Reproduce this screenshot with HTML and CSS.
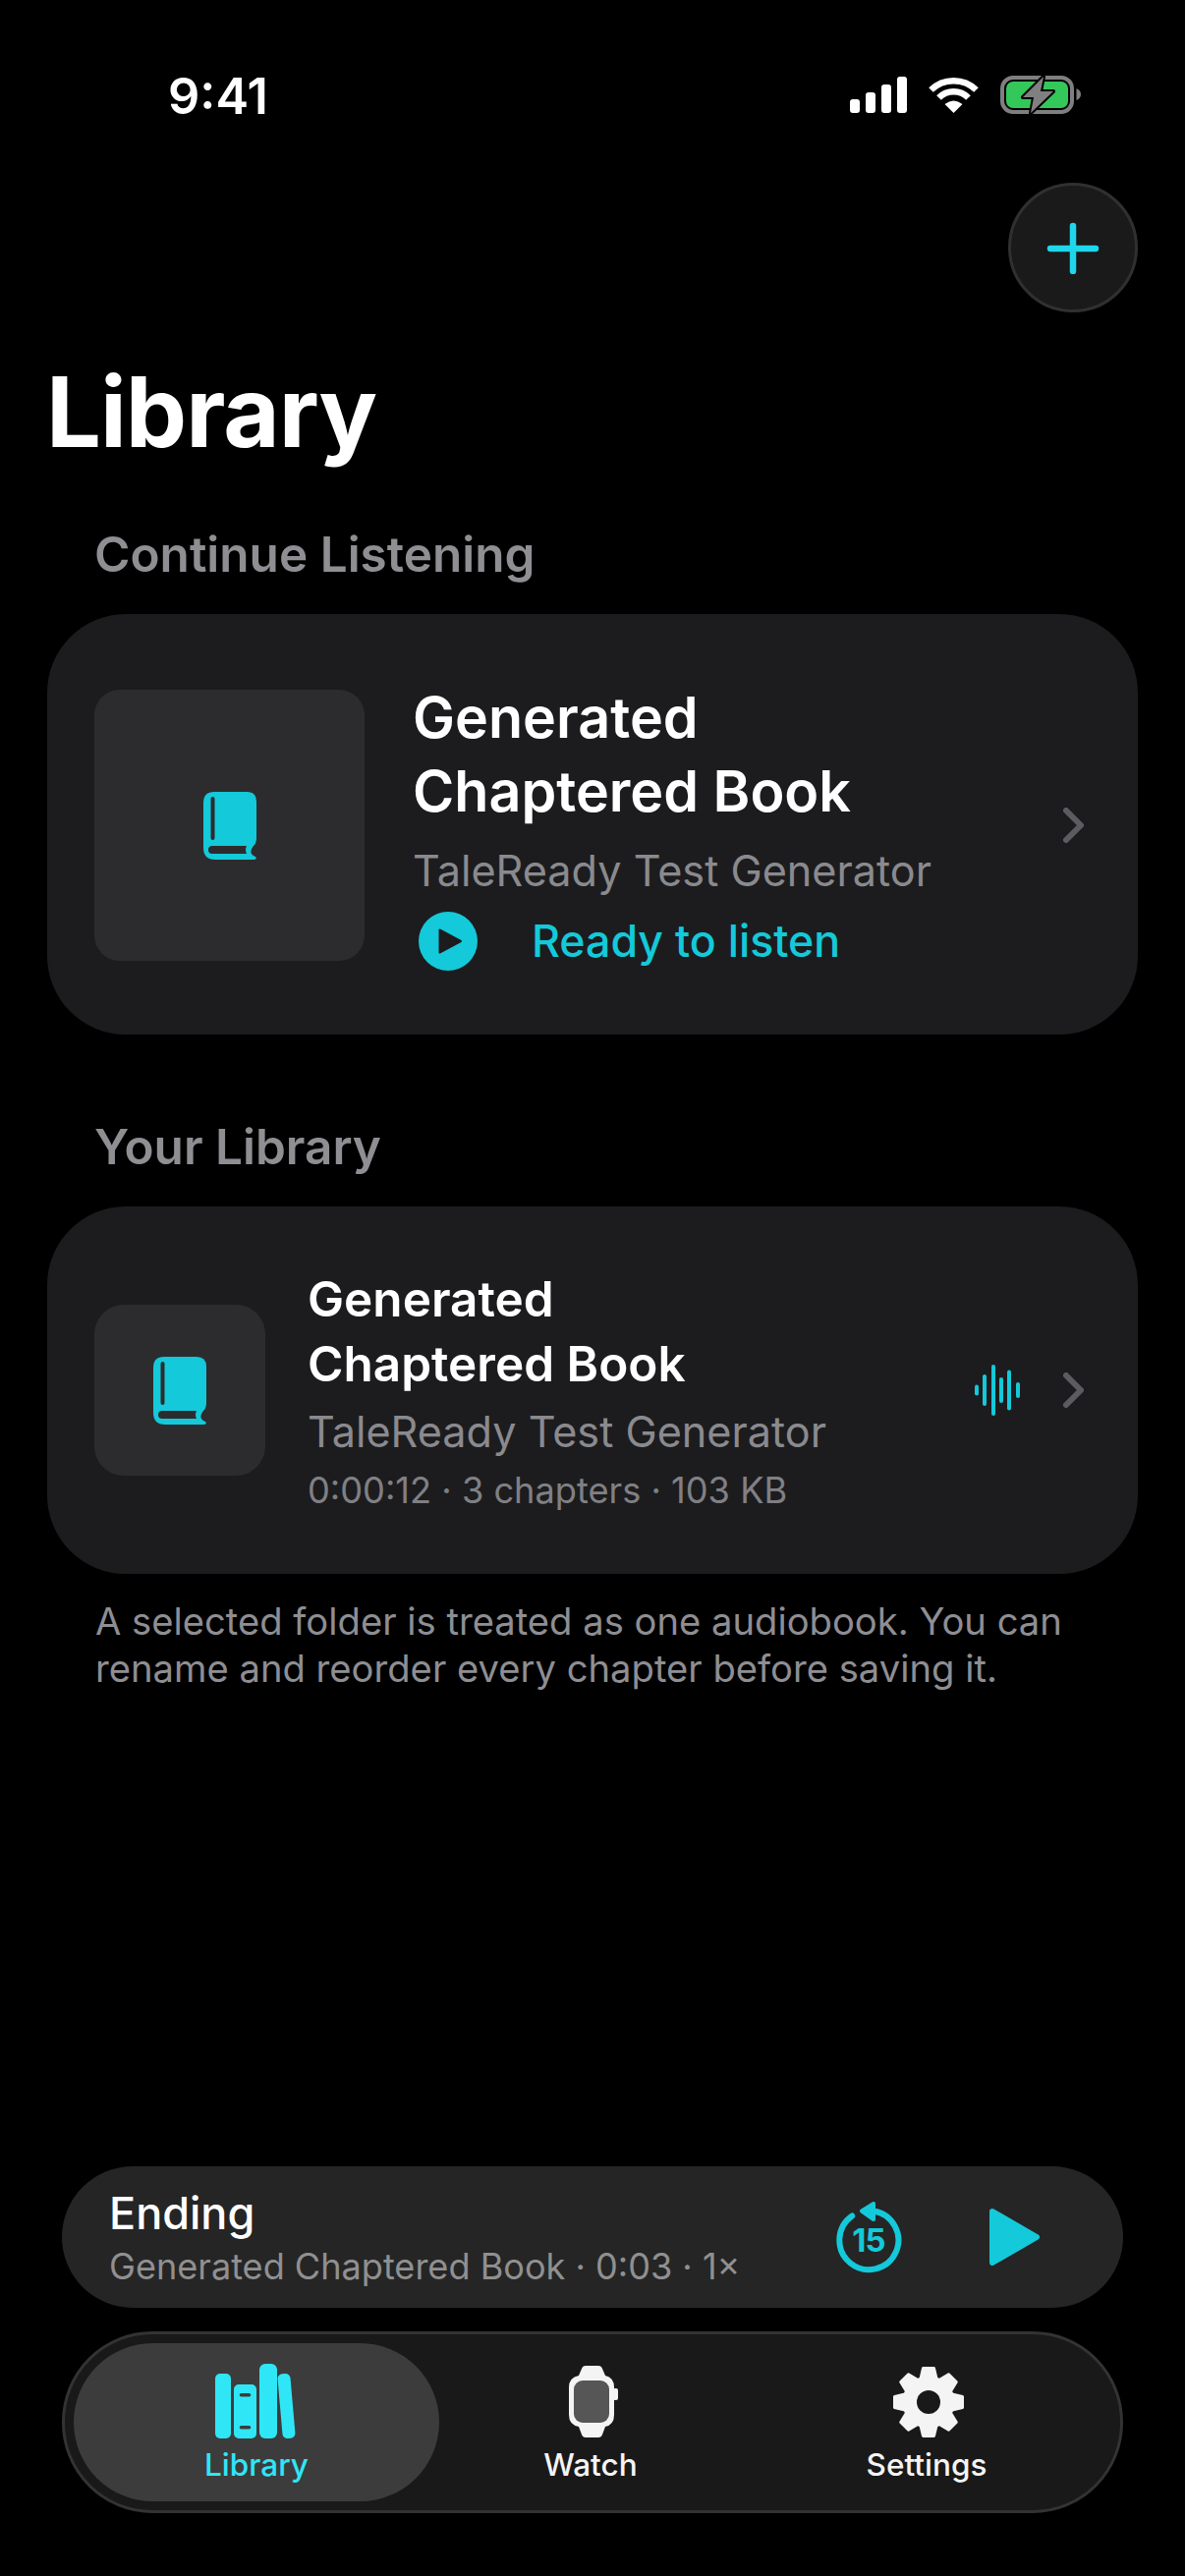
FILE: index.html
```html
<!DOCTYPE html>
<html lang="en">
<head>
    <meta charset="UTF-8">
    <meta name="viewport" content="width=device-width, initial-scale=1.0">
    <title>Library</title>
    <link rel="stylesheet" href="styles.css">
</head>
<body>
    <svg class="defs" width="0" height="0">
        <symbol id="book" viewBox="0 0 54 69">
            <path fill-rule="evenodd" d="M11 0H44Q54 0 54 10V47Q54 52 51 55Q47 60 49 63Q50 65 53 66Q55 68 52 69H12Q0 69 0 57V11Q0 0 11 0ZM7.5 7V47a2 2 0 0 0 4 0V7a2 2 0 0 0-4 0ZM9 55a4 4 0 0 0 0 8H44Q42 59 44 55Z"/>
        </symbol>
        <symbol id="chevron" viewBox="0 0 21 36">
            <path d="M3 3L18 18L3 33" fill="none" stroke="#5c5c60" stroke-width="6" stroke-linecap="round" stroke-linejoin="round"/>
        </symbol>
    </svg>

    <div class="page">
        <div class="status-bar">
            <span class="time">9:41</span>
            <div class="status-icons">
                <svg width="58" height="37" viewBox="0 0 58 37" fill="#fff">
                    <rect x="0" y="23" width="10" height="14" rx="3"/>
                    <rect x="16" y="16" width="10" height="21" rx="3"/>
                    <rect x="32" y="8" width="10" height="29" rx="3"/>
                    <rect x="48" y="0" width="10" height="37" rx="3"/>
                </svg>
                <svg width="51" height="37" viewBox="0 0 51 37">
                    <path d="M2.5 13.5A33 33 0 0 1 48.5 13.5" fill="none" stroke="#fff" stroke-width="6.5"/>
                    <path d="M10.5 21.5A21 21 0 0 1 40.5 21.5" fill="none" stroke="#fff" stroke-width="6.5"/>
                    <path d="M25.5 37L16.5 28Q25.5 21 34.5 28Z" fill="#fff"/>
                </svg>
                <svg class="battery" width="82" height="39" viewBox="0 0 82 39">
                    <rect x="2" y="2" width="71" height="35" rx="11" fill="none" stroke="#7f7f7f" stroke-width="4"/>
                    <rect x="6" y="6" width="63" height="27" rx="7" fill="#34c759"/>
                    <path d="M77.5 13Q82 15 82 19Q82 23 77.5 25Z" fill="#7f7f7f"/>
                    <path d="M44 1L23 22H34L31 38L54 16H41Z" fill="#808080" stroke="#000" stroke-width="4" stroke-linejoin="round" paint-order="stroke"/>
                </svg>
            </div>
        </div>

        <div class="top-actions">
            <button class="add-btn" type="button" aria-label="Add">
                <svg width="54" height="54" viewBox="0 -1 54 54">
                    <path d="M27 4V50M4 27H50" stroke="#1fd6ea" stroke-width="6.5" stroke-linecap="round"/>
                </svg>
            </button>
        </div>

        <h1 class="page-title">Library</h1>

        <h2 class="section-label">Continue Listening</h2>
        <div class="card card-large">
            <div class="thumb thumb-large">
                <svg class="book-icon"><use href="#book"/></svg>
            </div>
            <div class="card-text">
                <div class="book-title title-large">Generated<br>Chaptered Book</div>
                <div class="book-author author-large">TaleReady Test Generator</div>
                <div class="ready-row">
                    <svg width="60" height="60" viewBox="0 0 60 60">
                        <circle cx="30" cy="30" r="30" fill="#14c9d9"/>
                        <path d="M21.5 18.5L43 30L21.5 41.5Z" fill="#1c1c1e" stroke="#1c1c1e" stroke-width="2" stroke-linejoin="round"/>
                    </svg>
                    <span class="ready-text">Ready to listen</span>
                </div>
            </div>
            <svg class="chevron"><use href="#chevron"/></svg>
        </div>

        <h2 class="section-label section-label-second">Your Library</h2>
        <div class="card card-small">
            <div class="thumb thumb-small">
                <svg class="book-icon"><use href="#book"/></svg>
            </div>
            <div class="card-text">
                <div class="book-title title-small">Generated<br>Chaptered Book</div>
                <div class="book-author author-small">TaleReady Test Generator</div>
                <div class="book-meta">0:00:12 · 3 chapters · 103 KB</div>
            </div>
            <svg class="wave" width="46" height="52" viewBox="0 0 46 52" fill="#14c9d9">
                <rect x="0" y="20.5" width="4" height="11" rx="2"/>
                <rect x="8" y="10" width="4" height="32" rx="2"/>
                <rect x="17" y="0" width="4" height="52" rx="2"/>
                <rect x="25" y="13" width="4" height="26" rx="2"/>
                <rect x="33" y="5.5" width="4" height="41" rx="2"/>
                <rect x="42" y="18" width="4" height="16" rx="2"/>
            </svg>
            <svg class="chevron"><use href="#chevron"/></svg>
        </div>
        <p class="footnote">A selected folder is treated as one audiobook. You can rename and reorder every chapter before saving it.</p>

        <div class="bottom">
            <div class="mini-player">
                <div class="mini-text">
                    <div class="mini-title">Ending</div>
                    <div class="mini-sub">Generated Chaptered Book · 0:03 · 1×</div>
                </div>
                <svg class="skip" width="67" height="73" viewBox="0 0 67 73">
                    <path d="M16.2 14.5A30 30 0 1 0 38 9.5" fill="none" stroke="#14c9d9" stroke-width="6" stroke-linecap="round"/>
                    <path d="M26 9.5L38 2V18Z" fill="#14c9d9" stroke="#14c9d9" stroke-width="4" stroke-linejoin="round"/>
                    <text class="skip-num" x="33" y="51" text-anchor="middle">15</text>
                </svg>
                <svg class="mini-play" width="51" height="58" viewBox="0 0 51 58">
                    <path d="M3 3L48 29L3 55Z" fill="#14c9d9" stroke="#14c9d9" stroke-width="6" stroke-linejoin="round"/>
                </svg>
            </div>

            <nav class="tab-bar">
                <div class="tab tab-active">
                    <div class="tab-icon">
                        <svg class="shelf" width="82" height="77" viewBox="0 0 82 77" fill="#2fe6f6">
                            <rect x="0" y="10" width="16" height="66" rx="5"/>
                            <path fill-rule="evenodd" d="M24 21H37a5 5 0 0 1 5 5V71a5 5 0 0 1-5 5H24a5 5 0 0 1-5-5V26a5 5 0 0 1 5-5ZM26.5 30a1.8 1.8 0 0 0 0 3.6H34.5a1.8 1.8 0 0 0 0-3.6ZM26.5 63a1.8 1.8 0 0 0 0 3.6H34.5a1.8 1.8 0 0 0 0-3.6Z"/>
                            <rect x="45" y="0" width="18" height="76" rx="6"/>
                            <rect x="66" y="10" width="13" height="66" rx="5" transform="rotate(-5 72.5 43)"/>
                        </svg>
                    </div>
                    <span class="tab-label">Library</span>
                </div>
                <div class="tab">
                    <div class="tab-icon">
                        <svg class="watch" width="50" height="73" viewBox="0 0 50 73">
                            <path d="M13 3Q14 0 17 0H30Q33 0 34 3L37 10Q46 12 46 22V50Q46 60 37 62L34 70Q33 73 30 73H17Q14 73 13 70L10 62Q0 60 0 50V22Q0 12 10 10Z" fill="#f4f4f4"/>
                            <rect x="45" y="23" width="5" height="12" rx="2" fill="#f4f4f4"/>
                            <rect x="5" y="15" width="36" height="43" rx="9" fill="#565656"/>
                        </svg>
                    </div>
                    <span class="tab-label">Watch</span>
                </div>
                <div class="tab">
                    <div class="tab-icon">
                        <svg class="gear" width="72" height="72" viewBox="-36 -36 72 72">
                            <g fill="#f4f4f4" stroke="#f4f4f4" stroke-width="3" stroke-linejoin="round">
                                <circle r="25"/>
                                <path id="tooth" d="M-8 -24L-5.5 -34.5H5.5L8 -24Z"/>
                                <use href="#tooth" transform="rotate(45)"/>
                                <use href="#tooth" transform="rotate(90)"/>
                                <use href="#tooth" transform="rotate(135)"/>
                                <use href="#tooth" transform="rotate(180)"/>
                                <use href="#tooth" transform="rotate(225)"/>
                                <use href="#tooth" transform="rotate(270)"/>
                                <use href="#tooth" transform="rotate(315)"/>
                            </g>
                            <circle r="12" fill="#191919"/>
                        </svg>
                    </div>
                    <span class="tab-label">Settings</span>
                </div>
            </nav>
        </div>
    </div>
</body>
</html>
```
FILE: styles.css
```css
* {
    box-sizing: border-box;
}
html, body {
    margin: 0;
    padding: 0;
    background: #000;
}
body {
    font-family: Inter, "Noto Sans", sans-serif;
    color: #fff;
}
.defs {
    position: absolute;
}
.page {
    width: 1206px;
    height: 2622px;
    display: flex;
    flex-direction: column;
    overflow: hidden;
}

/* status bar */
.status-bar {
    display: flex;
    justify-content: space-between;
    align-items: center;
    height: 56px;
    margin-top: 68px;
    padding: 0 106px 0 171px;
}
.time {
    padding-top: 3px;
    font-size: 50.5px;
    line-height: 56px;
    font-weight: 600;
}
.status-icons {
    display: flex;
    align-items: center;
    gap: 22px;
}
.battery {
    overflow: visible;
}

/* header */
.top-actions {
    display: flex;
    justify-content: flex-end;
    margin-top: 62px;
    padding-right: 48px;
}
.add-btn {
    width: 132px;
    height: 132px;
    padding: 0;
    display: flex;
    align-items: center;
    justify-content: center;
    background: #1a1a1a;
    border: 3px solid #303030;
    border-radius: 50%;
}
.page-title {
    margin: 46px 0 0 47px;
    font-size: 99px;
    line-height: 110px;
    font-weight: 700;
    letter-spacing: -1px;
}
.section-label {
    margin: 60px 0 31px 96px;
    font-size: 49.5px;
    line-height: 60px;
    font-weight: 600;
    color: #8e8e93;
}
.section-label-second {
    margin-top: 84px;
    margin-bottom: 31px;
}

/* cards */
.card {
    display: flex;
    align-items: center;
    margin: 0 48px;
    padding: 0 55px 0 48px;
    background: #1c1c1e;
    border-radius: 80px;
}
.card-large {
    height: 428px;
    padding-top: 2px;
}
.card-small {
    height: 374px;
}
.thumb {
    display: flex;
    align-items: center;
    justify-content: center;
    flex-shrink: 0;
    background: #2c2c2e;
}
.thumb-large {
    width: 275px;
    height: 276px;
    margin-right: 49px;
    border-radius: 26px;
}
.thumb-small {
    width: 174px;
    height: 174px;
    margin-right: 43px;
    border-radius: 30px;
}
.book-icon {
    width: 54px;
    height: 69px;
    fill: #14c9d9;
}
.card-text {
    flex: 1;
    min-width: 0;
}
.book-title {
    font-weight: 600;
}
.title-large {
    font-size: 57.4px;
    line-height: 75px;
}
.title-small {
    font-size: 49.5px;
    line-height: 66px;
}
.book-author {
    font-size: 43.2px;
    line-height: 56px;
    color: #8a8a8e;
}
.author-large {
    margin-top: 15px;
}
.author-small {
    margin-top: 8px;
}
.book-meta {
    margin-top: 8px;
    font-size: 36.2px;
    line-height: 48px;
    color: #808084;
}
.ready-row {
    display: flex;
    align-items: center;
    gap: 55px;
    margin: 14px 0 0 6px;
}
.ready-text {
    font-size: 44.7px;
    line-height: 60px;
    font-weight: 500;
    color: #14c9d9;
}
.chevron {
    width: 21px;
    height: 36px;
    flex-shrink: 0;
}
.wave {
    flex-shrink: 0;
    margin-right: 44px;
}
.footnote {
    margin: 24px 97px 0;
    font-size: 38.2px;
    line-height: 48px;
    color: #8e8e93;
}

/* player and tabs */
.bottom {
    margin-top: auto;
    padding: 0 63px 64px;
}
.mini-player {
    display: flex;
    align-items: center;
    height: 144px;
    padding: 0 85px 0 48px;
    background: #252525;
    border-radius: 72px;
}
.mini-text {
    flex: 1;
    min-width: 0;
}
.mini-title {
    margin-top: 1px;
    font-size: 45px;
    line-height: 56px;
    font-weight: 500;
}
.mini-sub {
    margin-top: 3px;
    font-size: 36.1px;
    line-height: 46px;
    color: #909090;
    white-space: nowrap;
}
.skip {
    flex-shrink: 0;
    margin-right: 89px;
}
.skip-num {
    font-size: 33px;
    font-weight: 700;
    letter-spacing: -1px;
    fill: #14c9d9;
}
.mini-play {
    flex-shrink: 0;
}
.tab-bar {
    display: grid;
    grid-template-columns: 372px 308px 1fr;
    height: 185px;
    margin-top: 24px;
    padding: 9px;
    background: #191919;
    border: 3px solid #333;
    border-radius: 92px;
}
.tab {
    display: flex;
    flex-direction: column;
    align-items: center;
    padding-top: 21px;
}
.tab-active {
    background: #3c3c3c;
    border-radius: 81px;
}
.tab-icon {
    display: flex;
    align-items: center;
    height: 77px;
}
.shelf {
    margin-right: 2px;
}
.watch {
    margin-left: 5px;
}
.gear {
    margin-left: 3px;
}
.tab-label {
    margin-top: 6px;
    font-size: 31.5px;
    line-height: 40px;
    font-weight: 500;
    color: #f4f4f4;
}
.tab-active .tab-label {
    color: #2fe6f6;
}
```
